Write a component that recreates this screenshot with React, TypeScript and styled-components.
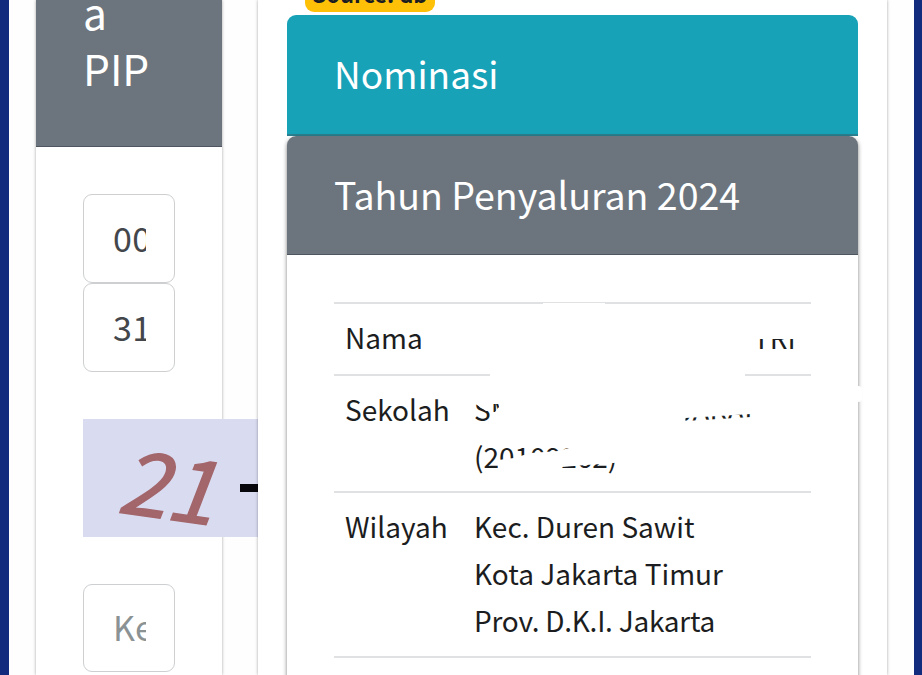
import styled, { createGlobalStyle } from "styled-components";

const region = [
  { text: "Kec. Duren Sawit" },
  { text: "Kota Jakarta Timur" },
  { text: "Prov. D.K.I. Jakarta", tight: true },
];

export default function App() {
  return (
    <>
      <GlobalStyle />
      <Page>
        <SearchCard>
          <SearchHeader>
            <span>a</span>
            <span>PIP</span>
          </SearchHeader>
          <SearchBody>
            <Field>
              <span>00</span>
            </Field>
            <Field>
              <span>31</span>
            </Field>
            <Captcha viewBox="0 0 280 118">
              <text className="number" transform="translate(33 93) rotate(8) skewX(-13)">
                21
              </text>
              <rect x="157" y="65" width="34" height="8" fill="#08080c" />
            </Captcha>
            <Field $placeholder>
              <span>Ke</span>
            </Field>
          </SearchBody>
        </SearchCard>

        <ResultPanel>
          <Badge>Source: db</Badge>
          <Title>Nominasi</Title>
          <YearCard>
            <Title $gray>Tahun Penyaluran 2024</Title>
            <Table>
              <Row $height={72}>
                <Label>Nama</Label>
                <Value>
                  <NameEnd>TRI</NameEnd>
                </Value>
                <Eraser $top={0} $left={209} $width={62} />
              </Row>
              <Row $height={117}>
                <Label>Sekolah</Label>
                <Value>
                  <SchoolLine>
                    <SchoolStart>SM</SchoolStart>
                    <SchoolEnd>JAKARTA</SchoolEnd>
                  </SchoolLine>
                  <SchoolCode>(20109262)</SchoolCode>
                </Value>
                <Eraser $top={-2} $left={156} $width={255} />
              </Row>
              <Row $height={165}>
                <Label>Wilayah</Label>
                <Value>
                  {region.map((line) => (
                    <Line key={line.text} $tight={line.tight}>
                      {line.text}
                    </Line>
                  ))}
                </Value>
              </Row>
              <Row $height={72} />
            </Table>
            <Notch />
          </YearCard>
        </ResultPanel>
      </Page>
    </>
  );
}

const GlobalStyle = createGlobalStyle`
  * {
    box-sizing: border-box;
    margin: 0;
  }

  body {
    overflow: hidden;
    background-color: #132b7d;
    font-family: "Noto Sans CJK SC", sans-serif;
    color: #1b1d20;
  }
`;

const Page = styled.main`
  height: 675px;
  margin: 0 8px 0 9px;
  padding: 0 27px;

  display: flex;
  justify-content: space-between;

  background-color: #fefefe;
  overflow: hidden;
`;

const SearchCard = styled.section`
  width: 186px;
  flex: none;

  background-color: #fff;
  box-shadow: 0 0 3px rgba(0, 0, 0, 0.35);
`;

const SearchHeader = styled.header`
  height: 147px;
  padding: 0 47px 50px;

  display: flex;
  flex-direction: column;
  justify-content: flex-end;

  background-color: #6c757d;
  border-bottom: 1px solid #50565f;
  overflow: hidden;

  font-size: 42.5px;
  line-height: 56px;
  color: #fff;
`;

const SearchBody = styled.div`
  padding: 47px;

  display: flex;
  flex-direction: column;
`;

const Field = styled.div<{ $placeholder?: boolean }>`
  width: 92px;
  height: ${(p) => (p.$placeholder ? 88 : 89)}px;
  padding: 0 28px 0 29px;

  border: 1.5px solid #cdcfd1;
  border-radius: 9px;

  font-size: 34px;
  line-height: ${(p) => (p.$placeholder ? 84 : 86)}px;
  letter-spacing: 0.3px;
  color: ${(p) => (p.$placeholder ? "#8b9294" : "#43474b")};

  span {
    display: block;
    overflow: hidden;
  }
`;

const Captcha = styled.svg`
  width: 280px;
  height: 118px;
  flex: none;

  margin: 47px 0;

  background-color: #d9dbf0;

  .number {
    font-family: "Noto Sans CJK SC", sans-serif;
    font-size: 88px;
    letter-spacing: -1px;
    fill: #a2666b;
    stroke: #a2666b;
    stroke-width: 1.5px;
  }
`;

const ResultPanel = styled.section`
  width: 629px;
  padding: 0 29px;
  flex: none;

  position: relative;

  background-color: #fff;
  box-shadow: 0 0 3px rgba(0, 0, 0, 0.35);
`;

const Badge = styled.div`
  width: 130px;
  height: 12px;
  margin: 0 0 3px 18px;

  display: flex;
  align-items: flex-end;
  justify-content: center;

  background-color: #ffc107;
  border-radius: 0 0 9px 9px;
  overflow: hidden;

  font-size: 22px;
  font-weight: 700;
  line-height: 37px;
  white-space: pre;
`;

const Title = styled.h3<{ $gray?: boolean }>`
  height: ${(p) => (p.$gray ? 119 : 121)}px;
  padding-left: 47px;

  background-color: ${(p) => (p.$gray ? "#6c757d" : "#17a2b8")};
  border-bottom: ${(p) => (p.$gray ? "1px solid #4d565e" : "2px solid #2a8090")};
  border-radius: 9px 9px 0 0;

  font-size: ${(p) => (p.$gray ? 37.5 : 37)}px;
  font-weight: 400;
  line-height: ${(p) => (p.$gray ? 115 : 116)}px;
  color: #fff;
`;

const YearCard = styled.article`
  height: 560px;

  position: relative;

  border-radius: 9px 9px 0 0;
  box-shadow: 0 2px 4px rgba(0, 0, 0, 0.5);
`;

const Table = styled.div`
  padding: 47px;
`;

const Row = styled.div<{ $height: number }>`
  height: ${(p) => p.$height}px;
  padding: 10px 11px;

  position: relative;

  display: grid;
  grid-template-columns: 129px 1fr;

  border-top: 2px solid #dfe1e3;

  font-size: 28px;
  line-height: 47px;
`;

const Label = styled.p`
  white-space: nowrap;
`;

const Value = styled.div`
  white-space: nowrap;
`;

const Line = styled.p<{ $tight?: boolean }>`
  letter-spacing: ${(p) => (p.$tight ? "-0.25px" : "normal")};
`;

const NameEnd = styled.p`
  padding-left: 279px;
  clip-path: inset(25px 0 0 0);
`;

const SchoolLine = styled.p`
  display: flex;
  gap: 164px;
`;

const SchoolStart = styled.span`
  clip-path: polygon(
    0 17px,
    12px 25px,
    16px 25px,
    18px 18px,
    25px 18px,
    25px 21px,
    21px 26px,
    17px 26px,
    16px 100%,
    0 100%
  );
`;

const SchoolEnd = styled.span`
  clip-path: polygon(8px 32px, 74px 28px, 74px 31px, 8px 35px);
`;

const SchoolCode = styled.p`
  clip-path: polygon(
    0 0,
    100px 0,
    95px 15px,
    84px 18px,
    57px 20px,
    50px 22px,
    40px 25px,
    24px 27px,
    24px 100%,
    88px 100%,
    88px 34px,
    112px 32px,
    128px 31px,
    150px 29px,
    150px 100%,
    0 100%
  );
`;

const Eraser = styled.i<{ $top: number; $left: number; $width: number }>`
  width: ${(p) => p.$width}px;
  height: 3px;

  position: absolute;
  top: ${(p) => p.$top - 1}px;
  left: ${(p) => p.$left}px;

  background-color: #fff;
`;

const Notch = styled.i`
  width: 8px;
  height: 16px;

  position: absolute;
  top: 250px;
  right: -4px;

  border-radius: 4px;
  background-color: #fff;
`;
